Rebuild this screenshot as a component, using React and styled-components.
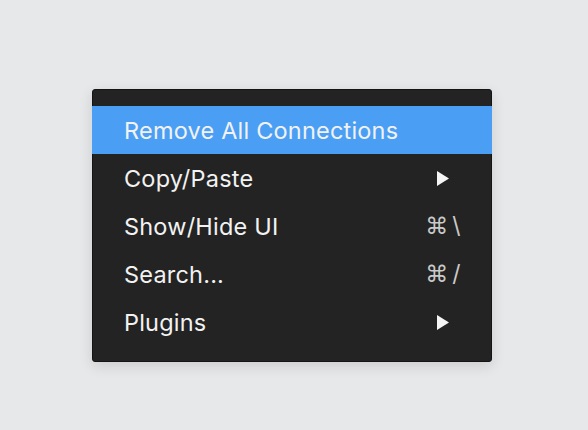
import React from 'react'
import styled, { createGlobalStyle } from 'styled-components'

const Global = createGlobalStyle`
    html, body {
        margin: 0;
        padding: 0;
        background: #e7e8ea;
    }
    body {
        font-family: Inter, "Noto Sans", "DejaVu Sans", sans-serif;
    }
`

const Page = styled.div`
    width: 588px;
    height: 430px;
    padding: 89px 0 0 92px;
    box-sizing: border-box;
`

const Menu = styled.ul`
    list-style: none;
    margin: 0;
    width: 400px;
    box-sizing: border-box;
    padding: 16px 0 15px;
    background: #232323;
    border: 1px solid #141414;
    border-radius: 3px;
    box-shadow: 0 4px 14px rgba(0, 0, 0, 0.12);
`

const Item = styled.li`
    display: flex;
    align-items: center;
    height: 48px;
    margin: 0 -1px;
    padding: 0 29px 0 32px;
    background: ${p => p.active ? '#4a9ff5' : 'transparent'};
    color: #f2f2f2;
    font-size: 23.5px;
    letter-spacing: 0.2px;
    cursor: default;
`

const Label = styled.span`
    flex: 1;
`

const Hint = styled.span`
    width: 40px;
    display: flex;
    justify-content: center;
    align-items: center;
    color: #c9c9c9;
    font-size: 23px;
    gap: 4px;
`

const Cmd = styled.span`
    font-family: "DejaVu Sans", sans-serif;
    font-size: 23px;
`

const Arrow = () => (
    <svg width="12" height="15" viewBox="0 0 12 15">
        <path d="M0 0 L12 7.5 L0 15 Z" fill="#f5f5f5" />
    </svg>
)

const items = [
    { label: 'Remove All Connections', active: true },
    { label: 'Copy/Paste', sub: true },
    { label: 'Show/Hide UI', key: '\\' },
    { label: 'Search...', key: '/' },
    { label: 'Plugins', sub: true },
]

const App = () => {
  return (
    <Page>
        <Global />
        <Menu>
            {items.map(it => (
                <Item key={it.label} active={it.active}>
                    <Label>{it.label}</Label>
                    <Hint>
                        {it.sub && <Arrow />}
                        {it.key && <><Cmd>⌘</Cmd><span>{it.key}</span></>}
                    </Hint>
                </Item>
            ))}
        </Menu>
    </Page>
  )
}

export default App
